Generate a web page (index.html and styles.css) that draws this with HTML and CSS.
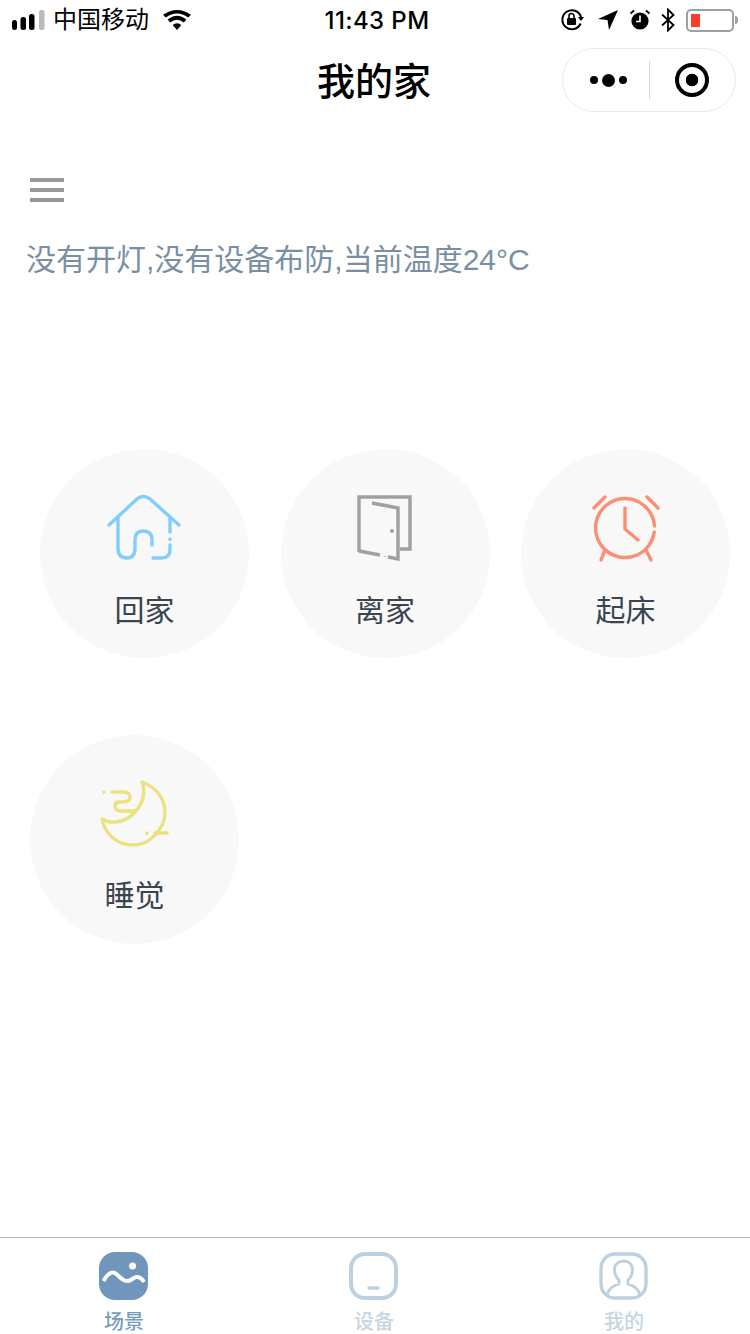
FILE: index.html
```html
<!DOCTYPE html>
<html lang="zh-CN">
<head>
    <meta charset="UTF-8">
    <meta name="viewport" content="width=device-width, initial-scale=1.0">
    <title>我的家</title>
    <link rel="stylesheet" href="styles.css">
</head>
<body>
    <div class="page">
        <div class="status-bar">
            <div class="status-left">
                <svg class="signal" width="33" height="22" viewBox="0 0 33 22">
                    <rect x="0" y="11" width="5" height="10" rx="2.5" fill="#000"/>
                    <rect x="8.5" y="8" width="5.5" height="13" rx="2.5" fill="#000"/>
                    <rect x="17" y="5" width="5.5" height="16" rx="2.5" fill="#000"/>
                    <rect x="27" y="1" width="5.5" height="20" rx="2" fill="#bbb"/>
                </svg>
                <span class="carrier">中国移动</span>
                <svg class="wifi" width="28" height="20" viewBox="0 0 28 20">
                    <path d="M14 20 L9.6 15 Q14 11.4 18.4 15 Z" fill="#000"/>
                    <path d="M7.2 12.4 L4.6 9.6 Q14 1.8 23.4 9.6 L20.8 12.4 Q14 7 7.2 12.4 Z" fill="#000"/>
                    <path d="M2.8 7.6 L0 4.8 Q14 -4.6 28 4.8 L25.2 7.6 Q14 -0.6 2.8 7.6 Z" fill="#000"/>
                </svg>
            </div>
            <div class="status-time">11:43 PM</div>
            <div class="status-right">
                <svg class="status-icon" width="23" height="24" viewBox="0 0 23 24">
                    <path d="M19.6 15.5 A9.5 9.5 0 1 1 20 9" fill="none" stroke="#000" stroke-width="2"/>
                    <path d="M17 9 H23 L20 13 Z" fill="#000"/>
                    <rect x="6" y="10" width="9" height="7" rx="1" fill="#000"/>
                    <path d="M8 10 V8 A2.5 2.5 0 0 1 13 8 V10" fill="none" stroke="#000" stroke-width="1.6"/>
                </svg>
                <svg class="status-icon status-location" width="20" height="22" viewBox="0 0 20 22">
                    <path d="M20 1 L11 21 L9.5 11 L0 10 Z" fill="#000"/>
                </svg>
                <svg class="status-icon status-alarm" width="20" height="22" viewBox="0 0 20 22">
                    <circle cx="10" cy="12" r="8.6" fill="#000"/>
                    <path d="M10 6.5 V12.5 H6" fill="none" stroke="#fff" stroke-width="1.6"/>
                    <path d="M0.5 4.5 L4 1.5 M19.5 4.5 L16 1.5" stroke="#000" stroke-width="1.8"/>
                </svg>
                <svg class="status-icon status-bt" width="14" height="24" viewBox="0 0 14 24">
                    <path d="M1 6.5 L12.5 17 L7 22.5 V1.5 L12.5 7 L1 17.5" fill="none" stroke="#000" stroke-width="1.8"/>
                </svg>
                <div class="battery"><div class="battery-level"></div></div>
                <div class="battery-nub"></div>
            </div>
        </div>

        <header class="nav-bar">
            <h1 class="nav-title">我的家</h1>
            <div class="capsule">
                <div class="capsule-more">
                    <span class="dot"></span>
                    <span class="dot dot-big"></span>
                    <span class="dot"></span>
                </div>
                <div class="capsule-line"></div>
                <div class="capsule-close"><span class="capsule-close-dot"></span></div>
            </div>
        </header>

        <main class="content">
            <div class="menu-btn">
                <span></span>
                <span></span>
                <span></span>
            </div>
            <p class="summary">没有开灯,没有设备布防,当前温度24°C</p>

            <div class="scenes">
                <div class="scene">
                    <svg class="scene-icon" width="110" height="90" viewBox="0 1 110 90" fill="none" stroke="#82cdfb" stroke-width="3.4" stroke-linecap="round" stroke-linejoin="round">
                        <path d="M19 45 L47 19 Q53 14 60 19 L89 45"/>
                        <path d="M28 37 V68 Q28 78 37 78 Q45 78 45 68 V60 Q45 51 53 51 Q62 51 62 60 V65"/>
                        <path d="M80 37 V52 M80 59 V59.5 M80 65 V70 Q80 78 71 78 H63"/>
                    </svg>
                    <span class="scene-name">回家</span>
                </div>
                <div class="scene">
                    <svg class="scene-icon" width="90" height="90" viewBox="0 1 90 90" fill="none" stroke="#a0a0a0" stroke-width="3.4">
                        <path d="M19 72 V17 H70 V69 H60"/>
                        <path d="M32 23 L58 28 V79 L48 77 M45 76 V76.5 M40 75 L19 71"/>
                        <circle cx="52" cy="51" r="1" stroke-width="2"/>
                    </svg>
                    <span class="scene-name">离家</span>
                </div>
                <div class="scene">
                    <svg class="scene-icon" width="90" height="90" viewBox="0 -4 90 90" fill="none" stroke="#fb8f73" stroke-width="3.4" stroke-linecap="round" stroke-linejoin="round">
                        <path d="M73.3 47 A29.5 29.5 0 1 1 73.5 41"/>
                        <path d="M72.5 50 V50.5"/>
                        <path d="M44 23 V44 L57 55"/>
                        <path d="M13 23 L24 12 M66 12 L77 23"/>
                        <path d="M24 65 L20 75 M65 65 L70 75"/>
                    </svg>
                    <span class="scene-name">起床</span>
                </div>
                <div class="scene scene-shift">
                    <svg class="scene-icon" width="90" height="90" viewBox="0 -3 90 90" fill="none" stroke="#ebe27f" stroke-width="3.4" stroke-linecap="round" stroke-linejoin="round">
                        <path d="M52 12 C68 18 75 30 75 43 C75 52 71 59 65 65 C59 72 51 75 43 75 C28 75 15 65 12 49 C22 55 36 52 45 42 C53 33 56 23 52 12 Z"/>
                        <path d="M22 22 H33 Q40 22 40 27 Q40 32 33 32 H29 Q25 32 25 36 Q25 41 31 41 H45"/>
                        <path d="M65 63 H77"/>
                        <path d="M14 22 V22.5 M57 63 V63.5"/>
                    </svg>
                    <span class="scene-name">睡觉</span>
                </div>
            </div>
        </main>

        <nav class="tab-bar">
            <div class="tab tab-active">
                <svg class="tab-icon" width="50" height="50" viewBox="0 0 50 50">
                    <rect x="0" y="0" width="49" height="48" rx="16" fill="#7097bb"/>
                    <circle cx="33.5" cy="14" r="3.5" fill="#fff"/>
                    <path d="M4.5 29 Q9 20.5 14 20.5 C19 20.5 21 29 28 29 C33 29 34 25 38 25 Q42 25 45 30" fill="none" stroke="#fff" stroke-width="4"/>
                </svg>
                <span class="tab-label">场景</span>
            </div>
            <div class="tab">
                <svg class="tab-icon" width="50" height="50" viewBox="0 0 50 50" fill="none" stroke="#bdd0e0">
                    <rect x="2" y="2" width="45" height="44" rx="14" stroke-width="4"/>
                    <path d="M20 36 H29" stroke-width="3.4" stroke-linecap="round"/>
                </svg>
                <span class="tab-label">设备</span>
            </div>
            <div class="tab">
                <svg class="tab-icon" width="50" height="50" viewBox="0 0 50 50" fill="none" stroke="#bdd0e0">
                    <rect x="2" y="2" width="45" height="44" rx="14" stroke-width="3.4"/>
                    <path d="M8 43 C10 36 14 34 20 32 V28 C17 26 15.5 21 15.5 18 C15.5 12 19.5 9 24.5 9 C29.5 9 33.5 12 33.5 18 C33.5 21 32 26 29 28 V32 C35 34 39 36 41 43" stroke-width="2.8"/>
                </svg>
                <span class="tab-label">我的</span>
            </div>
        </nav>
    </div>
</body>
</html>
```

FILE: styles.css
```css
* {
    box-sizing: border-box;
}

body {
    margin: 0;
    padding: 0;
    background-color: #fff;
    font-family: "Liberation Sans", "Noto Sans CJK SC", sans-serif;
}

.page {
    display: flex;
    flex-direction: column;
    width: 750px;
    height: 1334px;
    overflow: hidden;
}

/* status bar */
.status-bar {
    display: grid;
    grid-template-columns: 1fr auto 1fr;
    align-items: center;
    height: 40px;
    padding: 0 12px;
    color: #000;
}

.status-left {
    display: flex;
    align-items: center;
}

.carrier {
    margin-left: 8px;
    font-size: 24px;
    line-height: 40px;
}

.wifi {
    margin-left: 14px;
    margin-top: -1px;
}

.status-time {
    margin-left: 4px;
    font-family: Inter, "Liberation Sans", sans-serif;
    font-size: 24px;
    font-weight: 500;
    letter-spacing: 0.4px;
}

.status-right {
    display: flex;
    align-items: center;
    justify-content: flex-end;
}

.status-location {
    margin-left: 14px;
}

.status-alarm {
    margin-left: 12px;
}

.status-bt {
    margin-left: 11px;
}

.battery {
    width: 48px;
    height: 23px;
    margin-left: 11px;
    padding: 3px;
    border: 2px solid #a0a0a0;
    border-radius: 5px;
}

.battery-level {
    width: 9px;
    height: 13px;
    background-color: #ff3b30;
}

.battery-nub {
    width: 3px;
    height: 8px;
    margin-left: 1px;
    border-radius: 0 3px 3px 0;
    background-color: #a0a0a0;
}

/* nav bar */
.nav-bar {
    position: relative;
    display: flex;
    align-items: flex-start;
    justify-content: center;
    height: 88px;
}

.nav-title {
    margin: 0 0 0 -2px;
    font-size: 38px;
    font-weight: 500;
    line-height: 84px;
    color: #000;
}

.capsule {
    position: absolute;
    top: 8px;
    right: 14px;
    display: flex;
    align-items: center;
    width: 174px;
    height: 64px;
    border: 1px solid #eaeaea;
    border-radius: 32px;
    background-color: #fff;
}

.capsule-more {
    display: flex;
    align-items: center;
    justify-content: center;
    gap: 4px;
    width: 86px;
    padding-left: 5px;
}

.dot {
    width: 8px;
    height: 8px;
    border-radius: 50%;
    background-color: #000;
}

.dot-big {
    width: 13px;
    height: 13px;
}

.capsule-line {
    width: 1px;
    height: 38px;
    background-color: #d8d8d8;
}

.capsule-close {
    display: flex;
    align-items: center;
    justify-content: center;
    width: 86px;
}

.capsule-close-dot {
    display: block;
    width: 34px;
    height: 34px;
    border: 4px solid #000;
    border-radius: 50%;
    background: radial-gradient(circle, #000 0, #000 6px, #fff 6.6px);
}

/* content */
.content {
    flex: 1;
    padding: 50px 0 0;
}

.menu-btn {
    display: flex;
    flex-direction: column;
    gap: 6px;
    width: 34px;
    margin-left: 30px;
}

.menu-btn span {
    display: block;
    height: 4px;
    background-color: #999;
}

.summary {
    margin: 36px 0 0 26px;
    font-size: 30px;
    line-height: 44px;
    color: #7a8fa3;
}

.scenes {
    display: grid;
    grid-template-columns: repeat(3, 209px);
    column-gap: 31.5px;
    row-gap: 77px;
    margin: 167px 0 0 40px;
}

.scene {
    display: flex;
    flex-direction: column;
    align-items: center;
    width: 209px;
    height: 209px;
    padding-top: 32px;
    border-radius: 50%;
    background-color: #f8f8f8;
}

.scene-shift {
    margin-left: -10px;
}

.scene-icon {
    display: block;
    flex: none;
}

.scene-name {
    margin-top: 18px;
    font-size: 30px;
    line-height: 44px;
    color: #3a4550;
}

.scene-shift .scene-name {
    margin-top: 17px;
}

/* tabs */
.tab-bar {
    display: flex;
    height: 97px;
    border-top: 1px solid #b2b2b2;
}

.tab {
    display: flex;
    flex: 1;
    flex-direction: column;
    align-items: center;
    padding: 14px 2px 0 0;
}

.tab-icon {
    display: block;
    flex: none;
}

.tab-label {
    margin-top: 8px;
    font-size: 20px;
    font-weight: 500;
    line-height: 24px;
    color: #c6d5e2;
}

.tab-active .tab-label {
    color: #7a9cbc;
}
```
